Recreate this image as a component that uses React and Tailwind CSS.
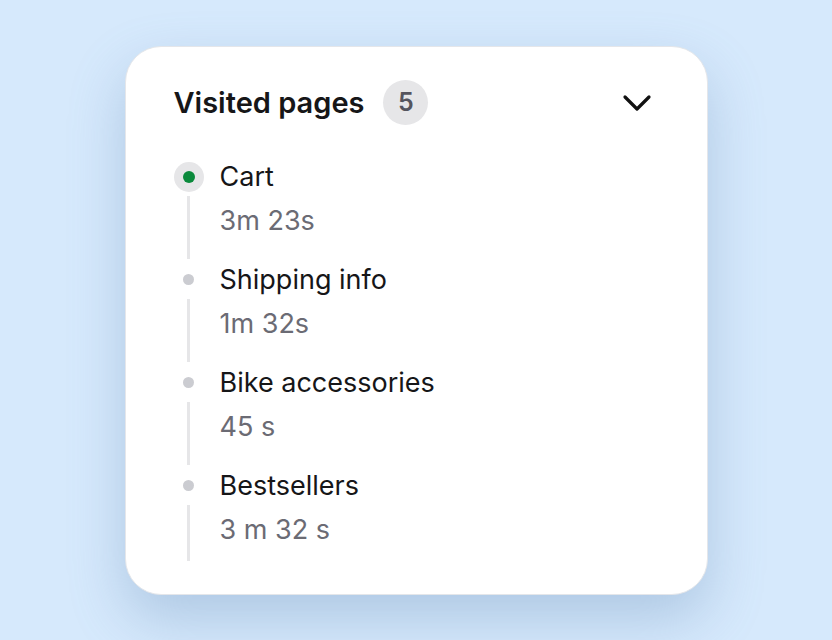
const pages = [
  { name: 'Cart', time: '3m 23s', active: true },
  { name: 'Shipping info', time: '1m 32s' },
  { name: 'Bike accessories', time: '45 s' },
  { name: 'Bestsellers', time: '3 m 32 s', last: true },
]

function Chevron() {
  return (
    <svg width="30" height="18" viewBox="0 0 30 18" fill="none">
      <polyline
        points="3,3 15,15 27,3"
        stroke="#111111"
        strokeWidth="3.2"
        strokeLinecap="round"
        strokeLinejoin="round"
      />
    </svg>
  )
}

function PageItem({ page }) {
  return (
    <div className="flex h-[103px]">
      {/* Dot + connector */}
      <div className="w-[30px] flex flex-col items-center">
        <div className="h-8 flex items-center justify-center">
          {page.active ? (
            <div className="w-[30px] h-[30px] rounded-full bg-[#e6e6e8] flex items-center justify-center">
              <div className="w-3 h-3 rounded-full bg-[#0b8a3c]" />
            </div>
          ) : (
            <div className="w-[11px] h-[11px] rounded-full bg-[#cbccd1]" />
          )}
        </div>
        <div className={page.last ? 'mt-[3px] w-[3px] h-[56px] bg-[#e6e6e8]' : 'mt-[3px] w-[3px] h-[63px] bg-[#e6e6e8]'} />
      </div>

      {/* Labels */}
      <div className="ml-4">
        <p className="h-8 leading-8 text-[27px] text-[#161618] whitespace-nowrap">{page.name}</p>
        <p className="mt-3 h-8 leading-8 text-[27px] text-[#6b6b74] whitespace-nowrap">{page.time}</p>
      </div>
    </div>
  )
}

export default function App() {
  return (
    <div
      className="w-[832px] h-[640px] bg-[#d6e9fc] flex items-center justify-center"
      style={{ fontFamily: 'Inter, "Noto Sans", sans-serif' }}
    >
      <div className="w-[583px] h-[549px] bg-white rounded-[36px] border border-[#e4e6ea] shadow-[0_24px_56px_rgba(95,135,180,0.33)] pt-[33px] pl-[48px] pr-[55px]">
        {/* Header */}
        <div className="flex items-center justify-between h-[46px]">
          <div className="flex items-center gap-[19px]">
            <h2 className="text-[29px] font-semibold text-[#161618] whitespace-nowrap">Visited pages</h2>
            <span className="w-[45px] h-[45px] rounded-full bg-[#e6e6e8] flex items-center justify-center text-[25px] font-semibold text-[#55555e]">
              5
            </span>
          </div>
          <Chevron />
        </div>

        {/* Timeline */}
        <div className="mt-[35px]">
          {pages.map(page => (
            <PageItem key={page.name} page={page} />
          ))}
        </div>
      </div>
    </div>
  )
}
